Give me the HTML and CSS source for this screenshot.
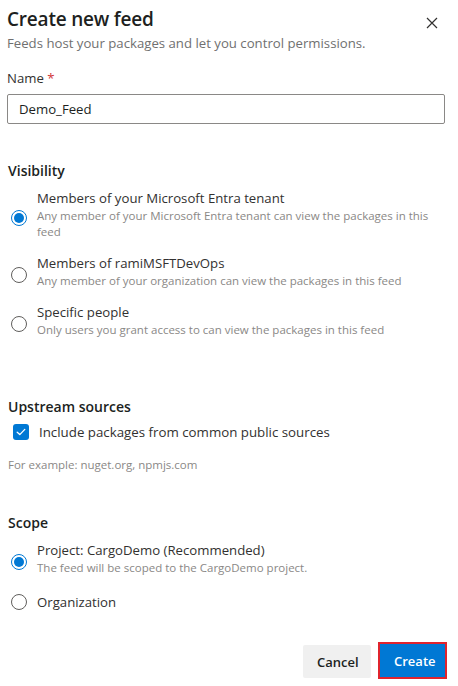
FILE: index.html
```html
<!DOCTYPE html>
<html>
<head>
<meta charset="utf-8">
<link rel="stylesheet" href="styles.css">
</head>
<body>
<div class="panel">
  <div class="header">
    <h1 class="title">Create new feed</h1>
    <button class="close" aria-label="Close">
      <svg width="12" height="12" viewBox="0 0 12 12"><path d="M1 1L11 11M11 1L1 11" stroke="#323130" stroke-width="1.2" fill="none"/></svg>
    </button>
  </div>
  <p class="subtitle">Feeds host your packages and let you control permissions.</p>

  <div class="field">
    <label class="field-label">Name <span class="req">*</span></label>
    <div class="input">Demo_Feed</div>
  </div>

  <section class="section vis">
    <h2 class="heading">Visibility</h2>
    <div class="options">
      <div class="option">
        <span class="radio checked"></span>
        <div class="opt-text">
          <div class="opt-label">Members of your Microsoft Entra tenant</div>
          <div class="opt-desc">Any member of your Microsoft Entra tenant can view the packages in this feed</div>
        </div>
      </div>
      <div class="option">
        <span class="radio"></span>
        <div class="opt-text">
          <div class="opt-label">Members of ramiMSFTDevOps</div>
          <div class="opt-desc">Any member of your organization can view the packages in this feed</div>
        </div>
      </div>
      <div class="option">
        <span class="radio"></span>
        <div class="opt-text">
          <div class="opt-label">Specific people</div>
          <div class="opt-desc">Only users you grant access to can view the packages in this feed</div>
        </div>
      </div>
    </div>
  </section>

  <section class="section upstream">
    <h2 class="heading">Upstream sources</h2>
    <div class="check-row">
      <span class="checkbox">
        <svg width="10" height="8" viewBox="0 0 10 8"><path d="M1.2 4.2L3.8 6.6L8.8 1.4" stroke="#fff" stroke-width="1.3" fill="none" stroke-linecap="round" stroke-linejoin="round"/></svg>
      </span>
      <span class="check-label">Include packages from common public sources</span>
    </div>
    <p class="example">For example: nuget.org, npmjs.com</p>
  </section>

  <section class="section scope">
    <h2 class="heading">Scope</h2>
    <div class="options">
      <div class="option">
        <span class="radio checked"></span>
        <div class="opt-text">
          <div class="opt-label">Project: CargoDemo (Recommended)</div>
          <div class="opt-desc">The feed will be scoped to the CargoDemo project.</div>
        </div>
      </div>
      <div class="option single">
        <span class="radio"></span>
        <div class="opt-text">
          <div class="opt-label">Organization</div>
        </div>
      </div>
    </div>
  </section>

  <div class="footer">
    <button class="btn cancel">Cancel</button>
    <button class="btn create">Create</button>
  </div>
</div>
</body>
</html>
```
FILE: styles.css
```css
* { box-sizing: border-box; }
html, body { margin: 0; padding: 0; background: #fff; }
body {
  font-family: "Open Sans", "Noto Sans", "Liberation Sans", sans-serif;
  color: #323130;
  width: 458px;
  height: 686px;
  overflow: hidden;
}
.panel {
  padding: 5px 13px 0 7px;
  display: flex;
  flex-direction: column;
}
.header {
  display: flex;
  align-items: center;
  justify-content: space-between;
}
.title {
  margin: 0;
  font-size: 19px;
  font-weight: 600;
  line-height: 28px;
  color: #201f1e;
  letter-spacing: -0.2px;
}
.close {
  border: 0;
  background: none;
  padding: 0;
  width: 20px;
  height: 20px;
  display: flex;
  align-items: center;
  justify-content: center;
  margin-right: 3px;
  margin-top: 8px;
}
.subtitle {
  margin: 0;
  font-size: 13.2px;
  line-height: 20px;
  color: #707070;
}
.field { margin-top: 15px; }
.field-label {
  display: block;
  font-size: 13.2px;
  line-height: 20px;
  color: #323130;
}
.req { color: #d13438; }
.input {
  margin-top: 6px;
  height: 30px;
  border: 1px solid #8a8886;
  border-radius: 2px;
  padding: 0 11px;
  font-size: 13.2px;
  line-height: 28px;
  color: #201f1e;
}
.section { padding-left: 1px; }
.vis { margin-top: 37px; }
.upstream { margin-top: 59px; }
.scope { margin-top: 40px; }
.heading {
  margin: 0;
  font-size: 14px;
  font-weight: 600;
  line-height: 20px;
  color: #201f1e;
}
.options {
  margin-top: 7px;
  display: flex;
  flex-direction: column;
  gap: 13px;
}
.option {
  display: flex;
  align-items: center;
  gap: 10px;
}
.opt-text { flex: 1; min-width: 0; }
.option .radio { margin-left: 3px; margin-top: 8px; }
.option.single .radio { margin-top: 0; }
.option.single { margin-top: 3px; }
.radio {
  flex: none;
  width: 16px;
  height: 16px;
  border: 1px solid #605e5c;
  border-radius: 50%;
  position: relative;
}
.radio.checked { border: 1.5px solid #0078d4; }
.radio.checked::after {
  content: "";
  position: absolute;
  left: 2px; top: 2px; right: 2px; bottom: 2px;
  border-radius: 50%;
  background: #0078d4;
}
.opt-label {
  font-size: 13.2px;
  line-height: 20px;
  color: #323130;
}
.opt-desc {
  font-size: 11.5px;
  line-height: 16px;
  color: #8a8886;
}
.check-row {
  margin-top: 5px;
  display: flex;
  align-items: center;
  gap: 10px;
  padding-left: 5px;
}
.checkbox {
  flex: none;
  width: 16px;
  height: 16px;
  border-radius: 3px;
  background: #0078d4;
  display: flex;
  align-items: center;
  justify-content: center;
}
.check-label { font-size: 13.3px; line-height: 20px; }
.example {
  margin: 15px 0 0;
  font-size: 11.5px;
  line-height: 16px;
  color: #8a8886;
}
.footer {
  margin-top: 33px;
  display: flex;
  justify-content: flex-end;
  gap: 7px;
  margin-right: -2px;
}
.btn {
  font-family: inherit;
  font-size: 13px;
  font-weight: 600;
  height: 33px;
  border: 0;
  border-radius: 2px;
  padding: 0 14px;
}
.cancel {
  background: #f0f0f0;
  color: #201f1e;
  width: 68px;
}
.create {
  background: #0078d4;
  color: #fff;
  width: 69px;
  height: 37px;
  margin-top: -3px;
  border: 2px solid #e0242d;
  border-radius: 0;
}
```
